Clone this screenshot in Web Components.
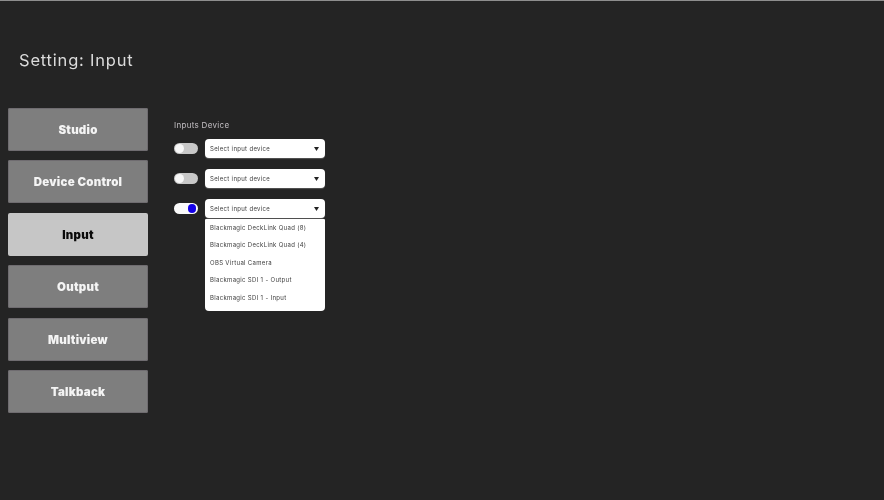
<!DOCTYPE html>
<html>
<head>
<meta charset="utf-8">
<title>Setting: Input</title>
<style>
  html, body { margin: 0; height: 100%; background: #242424; overflow: hidden; }
</style>
</head>
<body>
<settings-page>
  <span slot="title">Setting: Input</span>
  <nav-button slot="nav">Studio</nav-button>
  <nav-button slot="nav">Device Control</nav-button>
  <nav-button slot="nav" active>Input</nav-button>
  <nav-button slot="nav">Output</nav-button>
  <nav-button slot="nav">Multiview</nav-button>
  <nav-button slot="nav">Talkback</nav-button>
  <span slot="label">Inputs Device</span>
  <device-row slot="rows"></device-row>
  <device-row slot="rows"></device-row>
  <device-row slot="rows" on open></device-row>
</settings-page>

<script>
const FONT = `"Inter", "Noto Sans", "Liberation Sans", sans-serif`;

class SettingsPage extends HTMLElement {
  constructor() {
    super();
    this.attachShadow({mode: 'open'});
    this.shadowRoot.innerHTML = `
<style>
  :host {
    display: flex;
    flex-direction: column;
    box-sizing: border-box;
    width: 884px;
    height: 500px;
    border-top: 1px solid #8e8e8e;
    background: #242424;
    font-family: ${FONT};
    filter: blur(0.6px);
  }
  .title {
    margin: 49px 0 0 19px;
    height: 20px;
    line-height: 20px;
    font-size: 16.5px;
    letter-spacing: 0.8px;
    color: #dcdcdc;
  }
  .main {
    display: flex;
    margin: 38px 0 0 8px;
  }
  .nav {
    display: flex;
    flex-direction: column;
    gap: 9.4px;
    width: 140px;
  }
  .inputs {
    display: flex;
    flex-direction: column;
    margin-left: 26px;
    padding-top: 12px;
  }
  .label {
    height: 10px;
    line-height: 10px;
    font-size: 8px;
    letter-spacing: 0.3px;
    color: #c2bec2;
  }
  .rows {
    display: flex;
    flex-direction: column;
    gap: 11px;
    margin-top: 9px;
  }
</style>
<div class="title"><slot name="title"></slot></div>
<div class="main">
  <div class="nav"><slot name="nav"></slot></div>
  <div class="inputs">
    <div class="label"><slot name="label"></slot></div>
    <div class="rows"><slot name="rows"></slot></div>
  </div>
</div>`;
  }
}

class NavButton extends HTMLElement {
  constructor() {
    super();
    this.attachShadow({mode: 'open'});
    this.shadowRoot.innerHTML = `
<style>
  :host {
    display: flex;
    align-items: center;
    justify-content: center;
    box-sizing: border-box;
    height: 43px;
    padding-top: 1px;
    border-radius: 2px;
    background: #7e7e7e;
    box-shadow: inset 0 0 0 1px #6f6c70;
    color: #f4f4f4;
    font-size: 11.5px;
    font-weight: 900;
    letter-spacing: 0.25px;
  }
  :host([active]) {
    background: #c6c6c6;
    box-shadow: none;
    color: #0a0a0a;
  }
</style>
<slot></slot>`;
  }
}

class ToggleSwitch extends HTMLElement {
  constructor() {
    super();
    this.attachShadow({mode: 'open'});
    this.shadowRoot.innerHTML = `
<style>
  :host {
    display: flex;
    align-items: center;
    box-sizing: border-box;
    width: 23.5px;
    height: 11px;
    padding: 0 1.5px 0 0.5px;
    border-radius: 6px;
    background: #c8c8c8;
  }
  .knob {
    width: 9px;
    height: 9px;
    border-radius: 50%;
    background: #f8f8f8;
  }
  :host([on]) {
    justify-content: flex-end;
    background: #fbfbfb;
  }
  :host([on]) .knob {
    width: 8.5px;
    height: 8.5px;
    background: #1400e6;
  }
</style>
<div class="knob"></div>`;
  }
}

class SelectBox extends HTMLElement {
  constructor() {
    super();
    this.attachShadow({mode: 'open'});
    const items = [
      'Blackmagic DeckLink Quad (8)',
      'Blackmagic DeckLink Quad (4)',
      'OBS Virtual Camera',
      'Blackmagic SDI 1 - Output',
      'Blackmagic SDI 1 - Input'
    ];
    this.shadowRoot.innerHTML = `
<style>
  :host {
    display: block;
    position: relative;
    width: 120.5px;
    font-size: 6px;
    letter-spacing: 0.32px;
    color: #3c3c3c;
  }
  .box {
    display: flex;
    align-items: center;
    justify-content: space-between;
    box-sizing: border-box;
    height: 19px;
    padding: 0 6px 0 5.5px;
    border-radius: 4px;
    background: #fff;
    box-shadow: 0 1px 1px #555;
  }
  svg { width: 5px; height: 4px; }
  .menu {
    display: none;
    position: absolute;
    top: 20px;
    left: 0;
    right: 0;
    flex-direction: column;
    box-sizing: border-box;
    height: 91.5px;
    padding: 0 5.5px;
    border-radius: 1px 1px 4px 4px;
    background: #fff;
  }
  :host([open]) .menu { display: flex; }
  .item {
    height: 17.6px;
    line-height: 17.6px;
    white-space: nowrap;
  }
  .menu .item:first-child { margin-top: -0.5px; }
</style>
<div class="box">
  <span>Select input device</span>
  <svg viewBox="0 0 5 4"><path d="M0 0H5L2.5 4Z" fill="#222"/></svg>
</div>
<div class="menu">
  ${items.map(i => `<div class="item">${i}</div>`).join('')}
</div>`;
  }
}

class DeviceRow extends HTMLElement {
  constructor() {
    super();
    this.attachShadow({mode: 'open'});
    this.shadowRoot.innerHTML = `
<style>
  :host {
    display: flex;
    align-items: center;
    gap: 7px;
  }
</style>
<toggle-switch></toggle-switch>
<select-box></select-box>`;
  }
  connectedCallback() {
    const root = this.shadowRoot;
    if (this.hasAttribute('on')) root.querySelector('toggle-switch').setAttribute('on', '');
    if (this.hasAttribute('open')) root.querySelector('select-box').setAttribute('open', '');
  }
}

customElements.define('toggle-switch', ToggleSwitch);
customElements.define('select-box', SelectBox);
customElements.define('device-row', DeviceRow);
customElements.define('nav-button', NavButton);
customElements.define('settings-page', SettingsPage);
</script>
</body>
</html>
